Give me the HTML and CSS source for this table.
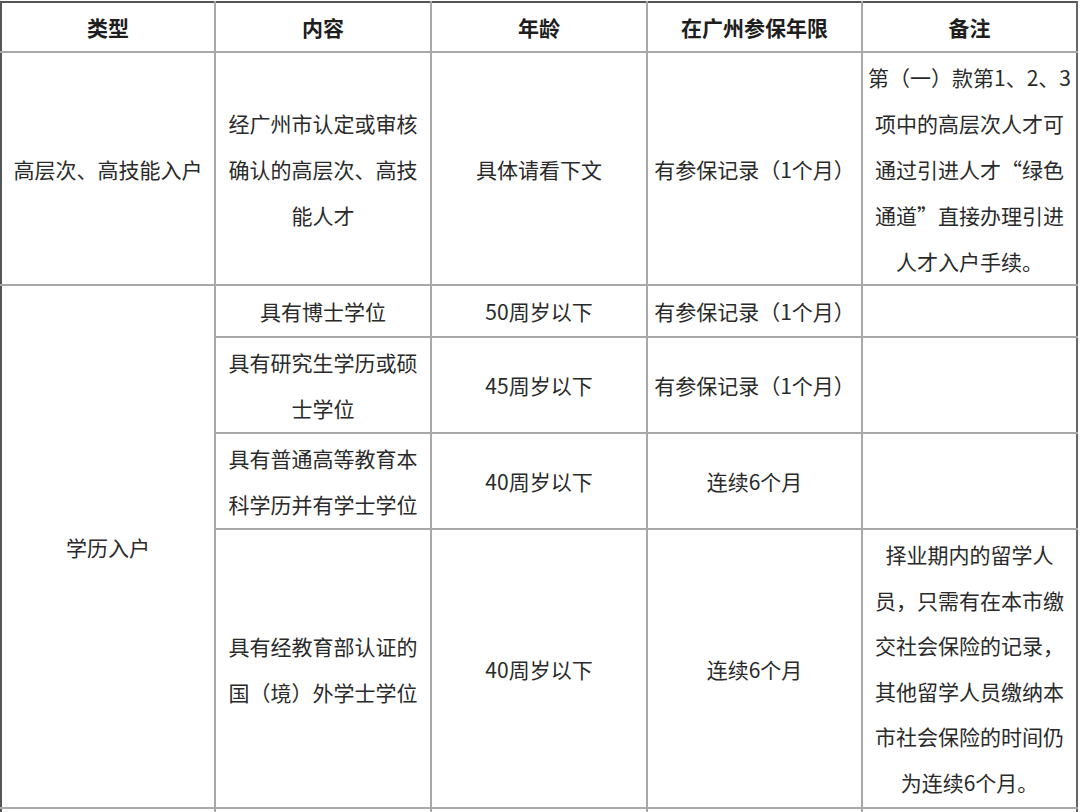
FILE: index.html
```html
<!DOCTYPE html>
<html lang="zh-CN">
<head>
<meta charset="utf-8">
<title>广州入户条件</title>
<link rel="stylesheet" href="styles.css">
</head>
<body>
<table class="grid">
  <colgroup>
    <col class="c1"><col class="c2"><col class="c3"><col class="c4"><col class="c5">
  </colgroup>
  <thead>
    <tr class="r-head">
      <th>类型</th>
      <th>内容</th>
      <th>年龄</th>
      <th>在广州参保年限</th>
      <th>备注</th>
    </tr>
  </thead>
  <tbody>
    <tr class="r1">
      <td>高层次、高技能入户</td>
      <td>经广州市认定或审核<br>确认的高层次、高技<br>能人才</td>
      <td>具体请看下文</td>
      <td>有参保记录（1个月）</td>
      <td class="note">第（一）款第1、2、3<br>项中的高层次人才可<br>通过引进人才“绿色<br>通道”直接办理引进<br>人才入户手续。</td>
    </tr>
    <tr class="r2">
      <td rowspan="4">学历入户</td>
      <td>具有博士学位</td>
      <td>50周岁以下</td>
      <td>有参保记录（1个月）</td>
      <td></td>
    </tr>
    <tr class="r3 tall">
      <td>具有研究生学历或硕<br>士学位</td>
      <td>45周岁以下</td>
      <td>有参保记录（1个月）</td>
      <td></td>
    </tr>
    <tr class="r4 tall">
      <td>具有普通高等教育本<br>科学历并有学士学位</td>
      <td>40周岁以下</td>
      <td>连续6个月</td>
      <td></td>
    </tr>
    <tr class="r5">
      <td>具有经教育部认证的<br>国（境）外学士学位</td>
      <td>40周岁以下</td>
      <td>连续6个月</td>
      <td class="note">择业期内的留学人<br>员，只需有在本市缴<br>交社会保险的记录，<br>其他留学人员缴纳本<br>市社会保险的时间仍<br>为连续6个月。</td>
    </tr>
    <tr class="r6">
      <td></td><td></td><td></td><td></td><td></td>
    </tr>
  </tbody>
</table>
</body>
</html>
```

FILE: styles.css
```css
html, body {
  margin: 0;
  padding: 0;
  background: #ffffff;
  overflow: hidden;
}

body {
  font-family: "Noto Sans CJK SC", "Noto Sans", "DejaVu Sans", sans-serif;
  color: #2a2a2a;
  padding: 1px 0 0 0;
}

.grid {
  width: 1078px;
  table-layout: fixed;
  border-collapse: collapse;
  border-top: 2px solid #555;
  border-left: 2px solid #555;
  border-right: 2px solid #666;
}

.c1 { width: 214px; }
.c2 { width: 216px; }
.c3 { width: 216px; }
.c4 { width: 215px; }
.c5 { width: 215px; }

.grid th,
.grid td {
  border: 2px solid #a8a8a8;
  text-align: center;
  vertical-align: middle;
  padding: 0 2px;
  font-size: 21px;
  line-height: 46px;
  white-space: nowrap;
  overflow: visible;
}

.grid th {
  font-weight: 700;
  font-size: 21px;
  color: #1e1e1e;
}

.grid tr.r-head th { border-top: none; }
.grid th:first-child,
.grid td:first-child { border-left: none; }
.grid th:last-child,
.grid td:last-child { border-right: none; }

.r-head { height: 50px; }
.r1 { height: 233px; }
.r2 { height: 52px; }
.r3 { height: 96px; }
.r4 { height: 96px; }
.r5 { height: 279px; }
.r6 { height: 40px; }

.tall td { line-height: 46px; }

.r5 .note { line-height: 45.5px; }
```
